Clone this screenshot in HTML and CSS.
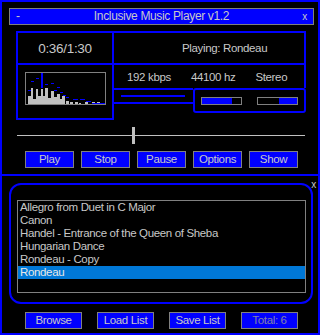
FILE: index.html
```html
<!DOCTYPE html>
<html lang="en">
<head>
    <meta charset="UTF-8">
    <title>Inclusive Music Player v1.2</title>
    <link rel="stylesheet" href="styles.css">
</head>
<body>
    <div class="player">
        <div class="top">
            <div class="titlebar">
                <span class="tb-min">-</span>
                <span class="tb-title">Inclusive Music Player v1.2</span>
                <span class="tb-close">x</span>
            </div>

            <div class="info">
                <div class="info-left">
                    <div class="time">0:36/1:30</div>
                    <div class="visual">
                        <svg class="vis-box" width="79" height="31" viewBox="0 0 79 31">
                            <g fill="#c0c0c0">
                                <rect x="2" y="23" width="3" height="8"/>
                                <rect x="5" y="15" width="2" height="16"/>
                                <rect x="7" y="26" width="3" height="5"/>
                                <rect x="10" y="16" width="2" height="15"/>
                                <rect x="12" y="23" width="3" height="8"/>
                                <rect x="15" y="16" width="2" height="15"/>
                                <rect x="17" y="23" width="2" height="8"/>
                                <rect x="19" y="15" width="3" height="16"/>
                                <rect x="22" y="25" width="3" height="6"/>
                                <rect x="25" y="18" width="3" height="13"/>
                                <rect x="28" y="24" width="3" height="7"/>
                                <rect x="31" y="21" width="3" height="10"/>
                                <rect x="34" y="26" width="2" height="5"/>
                                <rect x="36" y="23" width="3" height="8"/>
                                <rect x="40" y="28" width="3" height="3"/>
                                <rect x="44" y="29" width="3" height="2"/>
                                <rect x="49" y="29" width="3" height="2"/>
                                <rect x="53" y="30" width="2" height="1"/>
                                <rect x="59" y="29" width="3" height="2"/>
                                <rect x="66" y="29" width="3" height="2"/>
                                <rect x="71" y="29" width="3" height="2"/>
                            </g>
                            <g fill="#0000ff">
                                <rect x="2" y="17" width="3" height="1"/>
                                <rect x="5" y="8" width="3" height="1"/>
                                <rect x="10" y="5" width="3" height="1"/>
                                <rect x="15" y="0" width="2" height="15"/>
                                <rect x="19" y="11" width="3" height="1"/>
                                <rect x="25" y="10" width="3" height="1"/>
                                <rect x="28" y="17" width="3" height="1"/>
                                <rect x="31" y="14" width="3" height="1"/>
                                <rect x="34" y="19" width="3" height="1"/>
                                <rect x="37" y="22" width="3" height="1"/>
                                <rect x="40" y="24" width="3" height="1"/>
                                <rect x="47" y="26" width="5" height="1"/>
                                <rect x="54" y="26" width="5" height="1"/>
                                <rect x="60" y="28" width="5" height="1"/>
                                <rect x="66" y="30" width="13" height="1"/>
                            </g>
                        </svg>
                    </div>
                </div>

                <div class="info-right">
                    <div class="now-playing">Playing: Rondeau</div>
                    <div class="stats">
                        <span>192 kbps</span>
                        <span>44100 hz</span>
                        <span>Stereo</span>
                    </div>
                    <div class="info-bottom">
                        <div class="seek-box"><div class="seek-line"></div></div>
                        <div class="vol-box">
                            <div class="bar"><div class="bar-fill" style="width: 30px"></div></div>
                            <div class="bar"><div class="bar-fill" style="width: 18px; margin-left: 21px"></div></div>
                        </div>
                    </div>
                </div>
            </div>

            <div class="seek-slider">
                <div class="track track-left"></div>
                <div class="thumb"></div>
                <div class="track track-right"></div>
            </div>

            <div class="buttons">
                <button class="btn">Play</button>
                <button class="btn">Stop</button>
                <button class="btn">Pause</button>
                <button class="btn">Options</button>
                <button class="btn">Show</button>
            </div>
        </div>

        <div class="bottom">
            <span class="list-close">x</span>
            <div class="playlist">
                <ul class="list">
                    <li>Allegro from Duet in C Major</li>
                    <li>Canon</li>
                    <li>Handel - Entrance of the Queen of Sheba</li>
                    <li>Hungarian Dance</li>
                    <li>Rondeau - Copy</li>
                    <li class="selected">Rondeau</li>
                </ul>
            </div>
            <div class="footer">
                <button class="btn wide">Browse</button>
                <button class="btn wide">Load List</button>
                <button class="btn wide">Save List</button>
                <button class="btn wide total">Total: 6</button>
            </div>
        </div>
    </div>
</body>
</html>
```

FILE: styles.css
```css
body {
    margin: 0;
    background-color: #000;
    font-family: "Liberation Sans", Arial, sans-serif;
    font-size: 11.5px;
    letter-spacing: -0.35px;
    color: #c8c8c8;
}

.player {
    width: 320px;
    height: 335px;
    box-sizing: border-box;
    border: 2px solid #0000ff;
    display: flex;
    flex-direction: column;
}

.top {
    height: 172px;
    flex-shrink: 0;
    border-bottom: 2px solid #0000ff;
}

/* title bar */
.titlebar {
    margin: 6px 4px 0 7px;
    height: 15px;
    border: 1px solid #808080;
    background-color: #0000ff;
    padding: 0 6px 0 6px;
    display: grid;
    grid-template-columns: 1fr auto 1fr;
    align-items: center;
    line-height: 15px;
    font-size: 12px;
}

.tb-close {
    justify-self: end;
    font-size: 10px;
}

/* info panel */
.info {
    display: flex;
    margin: 6px 12px 0 14px;
}

.info-left {
    width: 94px;
    border: 2px solid #0000ff;
}

.time {
    height: 30px;
    border-bottom: 2px solid #0000ff;
    font-size: 13.5px;
    letter-spacing: -0.3px;
    display: flex;
    align-items: center;
    justify-content: center;
}

.visual {
    height: 46px;
}

.vis-box {
    display: block;
    margin: 7px 0 0 7px;
    border: 1px solid #808080;
}

.info-right {
    flex: 1;
    display: flex;
    flex-direction: column;
}

.now-playing {
    height: 30px;
    border: 2px solid #0000ff;
    border-left: none;
    padding-left: 68px;
    display: flex;
    align-items: center;
    white-space: nowrap;
}

.stats {
    height: 23px;
    border-right: 2px solid #0000ff;
    padding-left: 13px;
    display: flex;
    align-items: center;
    gap: 20px;
    white-space: nowrap;
}

.info-bottom {
    display: flex;
    height: 25px;
}

.seek-box {
    width: 79px;
    height: 12px;
    border-top: 2px solid #0000ff;
    border-bottom: 2px solid #0000ff;
}

.seek-line {
    margin: 5px 8px 0 7px;
    height: 2px;
    background-color: #0000ff;
}

.vol-box {
    flex: 1;
    border: 2px solid #0000ff;
    border-radius: 3px;
    padding: 0 6px;
    display: flex;
    align-items: center;
    justify-content: space-between;
}

.bar {
    width: 39px;
    height: 6px;
    border: 1px solid #808080;
}

.bar-fill {
    height: 6px;
    background-color: #0000ff;
}

/* position slider */
.seek-slider {
    display: flex;
    align-items: center;
    height: 17px;
    margin: 7px 13px 0 15px;
}

.track {
    height: 1px;
    background-color: #c0c0c0;
}

.track-left { width: 115px; }
.track-right { flex: 1; }

.thumb {
    width: 3px;
    height: 17px;
    background-color: #c0c0c0;
}

/* buttons */
.buttons {
    display: flex;
    gap: 7px;
    margin: 7px 0 0 23px;
}

.btn {
    width: 49px;
    height: 17px;
    box-sizing: border-box;
    padding: 0;
    border: 1px solid #808080;
    background-color: #0000ff;
    color: #c8c8c8;
    font: inherit;
    letter-spacing: inherit;
    line-height: 15px;
    white-space: nowrap;
}

.btn.wide { width: 57px; }
.btn.total { color: #8080a8; }

/* playlist */
.bottom {
    flex: 1;
    position: relative;
}

.list-close {
    position: absolute;
    top: 3px;
    right: 2px;
    font-size: 10px;
}

.playlist {
    margin: 7px 5px 0 7px;
    border: 2px solid #0000ff;
    border-radius: 12px;
    padding: 15px 5px 9px 6px;
}

.list {
    list-style: none;
    margin: 0;
    padding: 0;
    height: 91px;
    border: 1px solid #808080;
}

.list li {
    height: 13px;
    line-height: 13px;
    padding-left: 2px;
    white-space: nowrap;
}

.list li.selected {
    background-color: #0078d7;
    color: #e8e8e8;
}

.footer {
    display: flex;
    gap: 15px;
    margin: 8px 0 0 23px;
}
```
